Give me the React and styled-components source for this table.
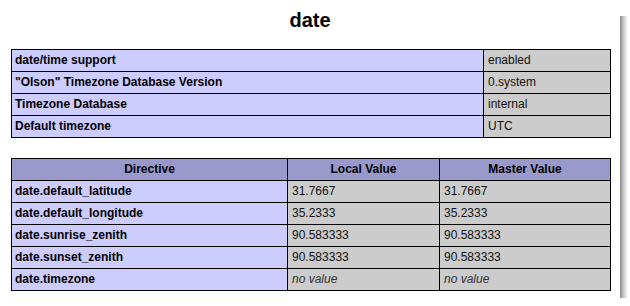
import React from 'react';
import styled, { createGlobalStyle } from 'styled-components';

const GlobalStyle = createGlobalStyle`
  body {
    margin: 0;
    background: #fff;
    font-family: "Liberation Sans", Arial, sans-serif;
  }
`;

const Card = styled.div`
  position: relative;
  width: 620px;
  height: 298px;
  background: #fff;
  padding-top: 9px;
  box-sizing: border-box;

  &::before {
    content: '';
    position: absolute;
    left: 100%;
    top: 16px;
    bottom: -4px;
    width: 8px;
    background: linear-gradient(to right, #8a8a8a, #c8c8c8 45%, #fff);
  }

  &::after {
    content: '';
    position: absolute;
    top: 100%;
    left: 20px;
    right: -4px;
    height: 8px;
    background: linear-gradient(to bottom, #8a8a8a, #c8c8c8 45%, #fff);
  }
`;

const Title = styled.h2`
  margin: 0;
  font-size: 20px;
  line-height: 23px;
  font-weight: bold;
  text-align: center;
  color: #000;
`;

const Table = styled.table`
  width: 600px;
  margin: ${props => props.$top}px auto 0 11px;
  border-collapse: collapse;
  font-size: 12px;
  line-height: 13px;
  color: #000;
`;

const Head = styled.th`
  background: #9999cc;
  border: 1px solid #000;
  padding: 4px 4px;
  font-weight: bold;
  text-align: center;
  width: ${props => props.$w}px;
`;

const Key = styled.td`
  background: #ccccff;
  border: 1px solid #000;
  padding: 4px 4px 4px 3px;
  font-weight: bold;
  text-align: left;
  width: ${props => props.$w ? `${props.$w}px` : 'auto'};
`;

const Value = styled.td`
  background: #cccccc;
  border: 1px solid #000;
  padding: 4px 4px;
  text-align: left;
  color: #111;
`;

const NoValue = styled.i`
  color: #333;
`;

const info = [
  ['date/time support', 'enabled'],
  ['"Olson" Timezone Database Version', '0.system'],
  ['Timezone Database', 'internal'],
  ['Default timezone', 'UTC'],
];

const directives = [
  ['date.default_latitude', '31.7667', '31.7667'],
  ['date.default_longitude', '35.2333', '35.2333'],
  ['date.sunrise_zenith', '90.583333', '90.583333'],
  ['date.sunset_zenith', '90.583333', '90.583333'],
  ['date.timezone', null, null],
];

const show = v => (v === null ? <NoValue>no value</NoValue> : v);

export default function App() {
  return (
    <>
      <GlobalStyle />
      <Card>
        <Title>date</Title>
        <Table $top={17}>
          <tbody>
            {info.map(([k, v], i) => (
              <tr key={k}>
                <Key $w={i === 0 ? 464 : 0}>{k}</Key>
                <Value>{v}</Value>
              </tr>
            ))}
          </tbody>
        </Table>
        <Table $top={20}>
          <thead>
            <tr>
              <Head $w={267}>Directive</Head>
              <Head $w={143}>Local Value</Head>
              <Head>Master Value</Head>
            </tr>
          </thead>
          <tbody>
            {directives.map(([k, local, master]) => (
              <tr key={k}>
                <Key>{k}</Key>
                <Value>{show(local)}</Value>
                <Value>{show(master)}</Value>
              </tr>
            ))}
          </tbody>
        </Table>
      </Card>
    </>
  );
}
